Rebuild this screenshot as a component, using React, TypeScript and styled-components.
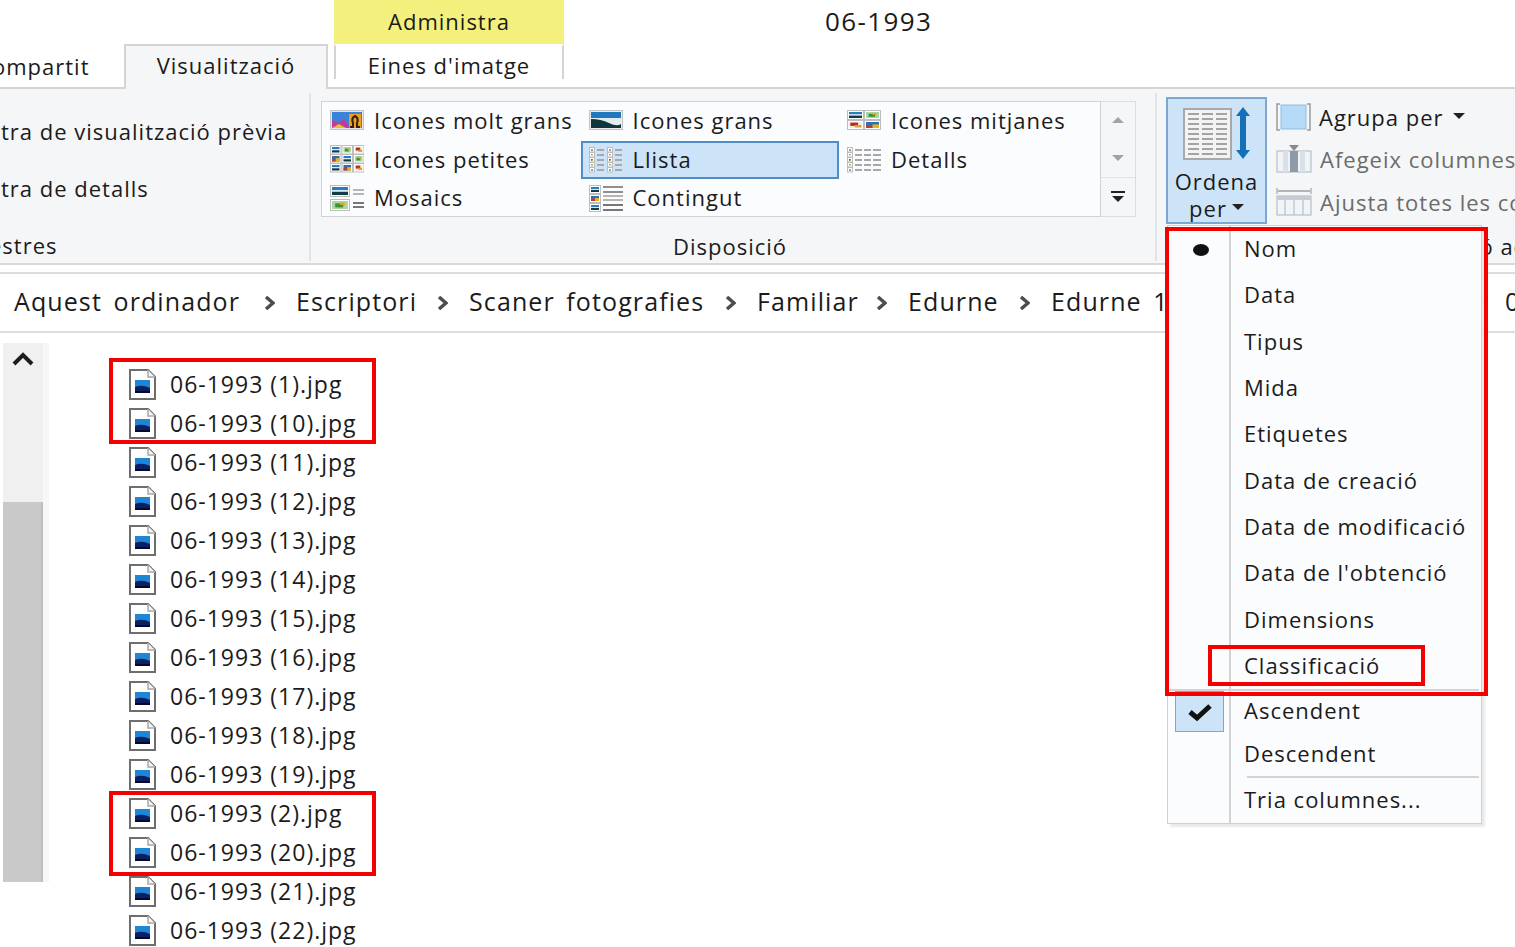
import React from 'react';
import styled, { createGlobalStyle } from 'styled-components';

const GlobalStyle = createGlobalStyle`
  html, body {
    margin: 0;
    padding: 0;
    background: #ffffff;
  }

  body {
    color: #1b1b1b;
    font-family: "Open Sans", "Noto Sans", sans-serif;
    letter-spacing: 1px;
  }
`;

const Page = styled.div`
  height: 947px;
  overflow: hidden;
  position: relative;
  width: 1515px;
`;

const TitleRow = styled.div`
  align-items: stretch;
  display: flex;
  height: 44px;
  padding-left: 334px;
`;

const ContextTab = styled.div`
  align-items: center;
  background: #f3f07e;
  display: flex;
  font-size: 22px;
  justify-content: center;
  padding-bottom: 2px;
  box-sizing: border-box;
  width: 230px;
`;

const WindowTitle = styled.div`
  align-items: center;
  display: flex;
  font-size: 26px;
  letter-spacing: 1.4px;
  margin-left: 261px;
  padding-bottom: 2px;
`;

const TabRow = styled.div`
  display: flex;
  height: 43px;
  position: relative;
`;

const Tab = styled.div<{ $active?: boolean; $width: number; $context?: boolean }>`
  align-items: center;
  background: ${(p) => (p.$active ? '#f5f6f7' : 'transparent')};
  border: 2px solid ${(p) => (p.$active ? '#d4d4d4' : 'transparent')};
  border-bottom: 0;
  border-left-color: ${(p) => (p.$context ? '#d4d4d4' : undefined)};
  border-right-color: ${(p) => (p.$context ? '#d4d4d4' : undefined)};
  box-sizing: border-box;
  display: flex;
  font-size: 22px;
  height: ${(p) => (p.$active ? '45px' : '35px')};
  justify-content: center;
  margin-right: ${(p) => (p.$active ? '6px' : '0')};
  padding: ${(p) => (p.$active ? '0 0 5px' : '5px 0 0')};
  position: relative;
  width: ${(p) => p.$width}px;
  z-index: 1;
`;

const ClippedTab = styled.div`
  align-items: center;
  display: flex;
  font-size: 22px;
  height: 43px;
  margin-left: -8px;
  width: 132px;
`;

const Ribbon = styled.div`
  background: #f5f6f7;
  border-bottom: 2px solid #d9d9d9;
  border-top: 2px solid #d4d4d4;
  box-sizing: border-box;
  display: flex;
  height: 178px;
  padding: 4px 0 2px;
`;

const LeftGroup = styled.div`
  border-right: 2px solid #e2e3e4;
  display: flex;
  flex-direction: column;
  flex-shrink: 0;
  font-size: 22px;
  gap: 29px;
  line-height: 28px;
  padding-top: 24px;
  width: 309px;
  white-space: nowrap;
`;

const LeftLine = styled.div<{ $shift: number }>`
  margin-left: ${(p) => p.$shift}px;
`;

const LayoutGroup = styled.div`
  border-right: 2px solid #e2e3e4;
  box-sizing: border-box;
  display: flex;
  flex-direction: column;
  flex-shrink: 0;
  padding: 8px 0 0 10px;
  width: 846px;
`;

const GalleryWrap = styled.div`
  display: flex;
`;

const Gallery = styled.div`
  background: #fbfcfe;
  border: 1px solid #d2d3d4;
  box-sizing: border-box;
  display: grid;
  grid-auto-rows: 38.5px;
  grid-template-columns: 258.5px 258.5px 258.5px;
  height: 116px;
  width: 780px;
`;

const GalleryItem = styled.div<{ $selected?: boolean }>`
  align-items: center;
  background: ${(p) => (p.$selected ? '#cde4f8' : 'transparent')};
  border: 2px solid ${(p) => (p.$selected ? '#4f8ec9' : 'transparent')};
  box-sizing: border-box;
  display: flex;
  font-size: 22px;
  gap: 10px;
  padding: 0 0 2px 6px;
  white-space: nowrap;
`;

const GalleryScroll = styled.div`
  border: 1px solid #dcddde;
  border-left: 0;
  box-sizing: border-box;
  display: flex;
  flex-direction: column;
  height: 116px;
  width: 35px;
`;

const ScrollCell = styled.div<{ $more?: boolean }>`
  align-items: center;
  border-top: ${(p) => (p.$more ? '1px solid #e2e3e4' : '0')};
  display: flex;
  flex: 1;
  flex-direction: column;
  gap: 3px;
  justify-content: center;
  padding-bottom: 1px;
`;

const MoreBar = styled.span`
  background: #222222;
  height: 2px;
  width: 14px;
`;

const Triangle = styled.span<{ $up?: boolean; $color?: string; $size?: number }>`
  border-bottom: ${(p) => (p.$up ? `${p.$size ?? 6}px solid ${p.$color ?? '#222222'}` : '0')};
  border-left: ${(p) => p.$size ?? 6}px solid transparent;
  border-right: ${(p) => p.$size ?? 6}px solid transparent;
  border-top: ${(p) => (p.$up ? '0' : `${p.$size ?? 6}px solid ${p.$color ?? '#222222'}`)};
  display: inline-block;
  height: 0;
  width: 0;
`;

const GroupLabel = styled.div`
  font-size: 22px;
  line-height: 28px;
  margin-top: auto;
  padding: 0 16px 1px 0;
  text-align: center;
  white-space: nowrap;
`;

const ViewGroup = styled.div`
  display: flex;
  flex-direction: column;
  flex-shrink: 0;
  padding: 4px 0 0 9px;
  width: 500px;
`;

const ViewLabel = styled(GroupLabel)`
  padding: 0 0 1px 189px;
  text-align: left;
`;

const ViewRow = styled.div`
  display: flex;
  gap: 9px;
`;

const SortButton = styled.div`
  align-items: center;
  background: #cde4f8;
  border: 2px solid #7ba8d2;
  box-sizing: border-box;
  display: flex;
  flex-direction: column;
  font-size: 22px;
  height: 127px;
  line-height: 27px;
  padding-top: 6px;
  width: 101px;

  svg {
    flex-shrink: 0;
  }
`;

const SortCaption = styled.div`
  margin-top: 7px;
  text-align: center;
`;

const ViewActions = styled.div`
  display: flex;
  flex-direction: column;
  gap: 13.5px;
  padding-top: 5px;
`;

const ViewAction = styled.div<{ $disabled?: boolean }>`
  align-items: center;
  color: ${(p) => (p.$disabled ? '#6c6c6c' : '#1b1b1b')};
  display: flex;
  font-size: 22px;
  gap: 8px;
  height: 29px;
  white-space: nowrap;
`;

const Caret = styled.span<{ $gap: number }>`
  display: inline-block;
  margin-left: ${(p) => p.$gap}px;
  transform: translateY(-7px);
`;

const AddressBar = styled.div`
  align-items: center;
  border-bottom: 2px solid #dcdcdc;
  border-top: 2px solid #dcdcdc;
  box-sizing: border-box;
  display: flex;
  font-size: 25px;
  height: 61px;
  letter-spacing: 1.1px;
  margin-top: 7px;
  padding: 0 0 3px 14px;
  white-space: nowrap;
  word-spacing: 4px;
`;

const Crumb = styled.span<{ $width: number }>`
  flex-shrink: 0;
  width: ${(p) => p.$width}px;
`;

const CrumbArrow = styled.svg`
  flex-shrink: 0;
  height: 14px;
  margin: 3px 21px 0 22px;
  width: 11px;
`;

const Content = styled.div`
  display: flex;
`;

const ScrollTrack = styled.div`
  background: #f0f0f0;
  display: flex;
  flex-direction: column;
  flex-shrink: 0;
  height: 539px;
  margin: 10px 0 0 3px;
  width: 40px;
`;

const ScrollArrow = styled.div`
  display: flex;
  height: 159px;
  justify-content: center;
  padding-top: 9px;
  box-sizing: border-box;
`;

const ScrollThumb = styled.div`
  background: #c9c9c9;
  border-right: 2px solid #bdbdbd;
  flex: 1;
`;

const ScrollEdge = styled.div`
  background: #f7f7f7;
  flex-shrink: 0;
  height: 539px;
  margin: 10px 0 0 0;
  width: 6px;
`;

const FileList = styled.div`
  display: flex;
  flex-direction: column;
  margin-left: 80px;
  padding-top: 31.5px;
`;

const Marked = styled.div<{ $top: number; $bottom: number }>`
  position: relative;

  &::after {
    border: 4px solid #f50000;
    bottom: ${(p) => -p.$bottom}px;
    content: '';
    left: -20px;
    position: absolute;
    top: ${(p) => -p.$top}px;
    width: 259px;
  }
`;

const FileRow = styled.div`
  align-items: center;
  display: flex;
  font-size: 23px;
  gap: 14px;
  height: 39px;
  white-space: nowrap;
`;

const Menu = styled.div`
  background: #fbfcfe;
  border: 1px solid #d0d0d0;
  box-shadow: 3px 3px 2px #e9e9e9;
  box-sizing: border-box;
  font-size: 22px;
  left: 1167px;
  padding-bottom: 1px;
  position: absolute;
  top: 225px;
  width: 315px;

  &::before {
    background: #d4d4d4;
    bottom: 0;
    content: '';
    left: 61px;
    position: absolute;
    top: 0;
    width: 2px;
  }
`;

const MenuSection = styled.div`
  position: relative;

  &::after {
    border: 4px solid #f50000;
    bottom: -7px;
    content: '';
    left: -3px;
    pointer-events: none;
    position: absolute;
    right: -7px;
    top: 1px;
    z-index: 2;
  }
`;

const MenuItem = styled.div<{ $height: number }>`
  align-items: center;
  box-sizing: border-box;
  display: flex;
  height: ${(p) => p.$height}px;
  padding: 0 0 2px 76px;
  position: relative;
  white-space: nowrap;
`;

const MarkedItem = styled.div`
  border: 4px solid #f50000;
  inset: 2px 56px 3px 40px;
  position: absolute;
`;

const Bullet = styled.span`
  background: #111111;
  border-radius: 50%;
  height: 12px;
  left: 25px;
  position: absolute;
  top: 18px;
  width: 16px;
`;

const MenuRule = styled.div<{ $inset: number }>`
  background: #d4d4d4;
  height: 2px;
  margin: 0 2px 0 ${(p) => p.$inset}px;
  position: relative;
`;

const CheckBox = styled.div`
  align-items: center;
  background: #cde4f8;
  border: 1px solid #7ba8d2;
  box-sizing: border-box;
  display: flex;
  height: 41px;
  justify-content: center;
  left: 7px;
  padding-top: 2px;
  position: absolute;
  top: 0;
  width: 49px;
`;

type PicKind = 'land' | 'flower' | 'warm' | 'city';

// little picture thumbnail used by the layout gallery icons
const Pic: React.FC<{ x: number; y: number; w: number; h: number; kind?: PicKind }> = ({
  x,
  y,
  w,
  h,
  kind = 'land',
}) => {
  const ix = x + 1.5;
  const iy = y + 1.5;
  const iw = w - 3;
  const ih = h - 3;
  return (
    <g>
      <rect x={x} y={y} width={w} height={h} fill="#ffffff" stroke="#bdbdbd" strokeWidth="1" />
      {kind === 'land' && (
        <>
          <rect x={ix} y={iy} width={iw} height={ih * 0.4} fill="#2b7cc2" />
          <rect x={ix} y={iy + ih * 0.4} width={iw} height={ih * 0.2} fill="#d9e8e8" />
          <rect x={ix} y={iy + ih * 0.6} width={iw} height={ih * 0.4} fill="#123c44" />
        </>
      )}
      {kind === 'flower' && (
        <>
          <rect x={ix} y={iy} width={iw} height={ih} fill="#a9d7a0" />
          <rect x={ix + iw * 0.2} y={iy + ih * 0.3} width={iw * 0.5} height={ih * 0.5} fill="#3f8f3a" />
          <rect x={ix + iw * 0.5} y={iy + ih * 0.2} width={iw * 0.3} height={ih * 0.3} fill="#d9a520" />
        </>
      )}
      {kind === 'warm' && (
        <>
          <rect x={ix} y={iy} width={iw} height={ih} fill="#f1ece4" />
          <rect x={ix + iw * 0.1} y={iy + ih * 0.1} width={iw * 0.6} height={ih * 0.55} fill="#c02a1c" />
          <rect x={ix + iw * 0.45} y={iy + ih * 0.5} width={iw * 0.5} height={ih * 0.4} fill="#e0a030" />
        </>
      )}
      {kind === 'city' && (
        <>
          <rect x={ix} y={iy} width={iw} height={ih} fill="#2f6db5" />
          <rect x={ix} y={iy + ih * 0.5} width={iw * 0.5} height={ih * 0.5} fill="#c13c2c" />
          <rect x={ix + iw * 0.5} y={iy + ih * 0.4} width={iw * 0.5} height={ih * 0.6} fill="#e4b520" />
        </>
      )}
    </g>
  );
};

const Lines: React.FC<{ x: number; y: number; w: number; n: number; step: number; color?: string }> = ({
  x,
  y,
  w,
  n,
  step,
  color = '#a8a8a8',
}) => (
  <>
    {Array.from({ length: n }).map((_, i) => (
      <rect key={i} x={x} y={y + i * step} width={w} height="2" fill={color} />
    ))}
  </>
);

const IconSvg = styled.svg`
  flex-shrink: 0;
  height: 34px;
  width: 34px;
`;

const ExtraLargeIcon = () => (
  <IconSvg viewBox="0 0 34 34">
    <rect x="0.5" y="7.5" width="33" height="19" fill="#e6e6e6" stroke="#c4c4c4" />
    <rect x="2" y="9" width="30" height="16" fill="#3b83d8" />
    <path d="M2 25 L2 17 L8 20 L14 16 L20 25 Z" fill="#c23aa0" />
    <path d="M2 25 L9 21 L16 25 Z" fill="#e8c020" />
    <rect x="19" y="11" width="12" height="14" fill="#e8a020" />
    <path d="M20 24 H23 V20 Q21 15 25 13 Q29 15 27 20 V24 H30" fill="none" stroke="#3a1c10" strokeWidth="2" />
  </IconSvg>
);

const LargeIcon = () => (
  <IconSvg viewBox="0 0 34 34">
    <rect x="0.5" y="7.5" width="33" height="19" fill="#ebebeb" stroke="#c4c4c4" />
    <rect x="2" y="9" width="30" height="6" fill="#2178bd" />
    <rect x="2" y="15" width="30" height="3" fill="#dfeced" />
    <path d="M2 16 Q12 16 20 20 T32 21 V25 H2 Z" fill="#10363d" />
  </IconSvg>
);

const MediumIcon = () => (
  <IconSvg viewBox="0 0 34 34">
    <Pic x={0.5} y={7.5} w={16} h={9} />
    <Pic x={17.5} y={7.5} w={16} h={9} kind="flower" />
    <Pic x={0.5} y={17.5} w={16} h={9} kind="warm" />
    <Pic x={17.5} y={17.5} w={16} h={9} kind="city" />
  </IconSvg>
);

const SmallIcon = () => {
  const kinds: PicKind[] = ['land', 'flower', 'warm', 'city', 'land', 'flower', 'land', 'city', 'warm'];
  return (
    <IconSvg viewBox="0 0 34 34">
      {kinds.map((kind, i) => (
        <Pic key={i} x={0.5 + (i % 3) * 11.5} y={3.5 + Math.floor(i / 3) * 9} w={10.5} h={8.5} kind={kind} />
      ))}
    </IconSvg>
  );
};

const ListIcon = () => {
  const kinds: PicKind[] = ['land', 'warm', 'city', 'flower', 'land'];
  return (
    <IconSvg viewBox="0 0 34 34">
      {[0, 18].map((col) => (
        <g key={col}>
          {kinds.map((kind, i) => (
            <Pic key={i} x={0.5 + col} y={5.5 + i * 5} w={5} h={4.5} kind={kind} />
          ))}
          <Lines x={8 + col} y={7} w={7} n={5} step={5} />
        </g>
      ))}
    </IconSvg>
  );
};

const DetailsIcon = () => {
  const kinds: PicKind[] = ['land', 'warm', 'city', 'flower', 'land'];
  return (
    <IconSvg viewBox="0 0 34 34">
      {kinds.map((kind, i) => (
        <Pic key={i} x={0.5} y={5.5 + i * 5} w={5} h={4.5} kind={kind} />
      ))}
      <Lines x={8} y={7} w={7} n={5} step={5} />
      <Lines x={17} y={7} w={7} n={5} step={5} />
      <Lines x={26} y={7} w={8} n={5} step={5} />
    </IconSvg>
  );
};

const TilesIcon = () => (
  <IconSvg viewBox="0 0 34 34">
    <Pic x={0.5} y={5.5} w={19} h={11} />
    <Pic x={0.5} y={19.5} w={19} h={11} kind="flower" />
    <Lines x={23} y={9} w={11} n={2} step={4} color="#b5b5b5" />
    <Lines x={23} y={22} w={11} n={2} step={4} color="#777777" />
  </IconSvg>
);

const ContentIcon = () => (
  <IconSvg viewBox="0 0 34 34">
    <Pic x={0.5} y={5.5} w={11} h={8} />
    <Pic x={0.5} y={14.5} w={11} h={8} kind="city" />
    <Pic x={0.5} y={23.5} w={11} h={8} />
    <Lines x={14} y={6} w={20} n={2} step={5} color="#8f8f8f" />
    <Lines x={14} y={15} w={20} n={2} step={4} color="#b5b5b5" />
    <Lines x={14} y={24} w={20} n={2} step={5} color="#777777" />
  </IconSvg>
);

const SortIcon = () => (
  <svg width="68" height="56" viewBox="0 0 68 56">
    <rect x="1" y="4" width="47" height="50" fill="#f3f3f3" stroke="#a9a9a9" strokeWidth="2" />
    {[0, 1, 2].map((c) => (
      <Lines key={c} x={5 + c * 14} y={8} w={11} n={9} step={5} color="#a4a4a4" />
    ))}
    <path d="M60 2 L67 11 H63 V45 H67 L60 54 L53 45 H57 V11 H53 Z" fill="#1570b8" />
  </svg>
);

const GroupIcon = () => (
  <svg width="35" height="30" viewBox="0 0 35 30">
    <path d="M4 2 H1 V28 H4 M31 2 H34 V28 H31" fill="none" stroke="#9a9a9a" strokeWidth="1.5" />
    <rect x="5" y="3" width="25" height="24" fill="#b6dbf8" stroke="#90bde0" />
  </svg>
);

const AddColumnsIcon = () => (
  <svg width="36" height="28" viewBox="0 0 36 28">
    <rect x="1" y="6" width="34" height="21" fill="#f1f4f7" stroke="#a9b4c0" />
    <rect x="7" y="6" width="5" height="21" fill="#d8e0e8" />
    <rect x="24" y="6" width="5" height="21" fill="#d8e0e8" />
    <rect x="14" y="6" width="8" height="21" fill="#8e9aa8" />
    <path d="M13 0 H23 L18 6 Z" fill="#8a8a8a" />
  </svg>
);

const FitColumnsIcon = () => (
  <svg width="36" height="28" viewBox="0 0 36 28">
    <path d="M1 0 V6 M35 0 V6" stroke="#8a94a0" />
    <path d="M2 3 H34" stroke="#6a7480" />
    <rect x="1" y="8" width="34" height="19" fill="#f1f4f7" stroke="#a9b4c0" />
    <rect x="1" y="8" width="34" height="4" fill="#c5ccd4" />
    <path d="M9 12 V27 M18 12 V27 M27 12 V27" stroke="#a9b4c0" />
  </svg>
);

const CheckIcon = () => (
  <svg width="26" height="20" viewBox="0 0 26 20">
    <path d="M3 10 L10 16 L23 4" fill="none" stroke="#111111" strokeWidth="5" />
  </svg>
);

const UpChevron = () => (
  <svg width="22" height="14" viewBox="0 0 22 14">
    <path d="M2 12 L11 3 L20 12" fill="none" stroke="#1c1c1c" strokeWidth="4" />
  </svg>
);

const FileIcon = () => (
  <svg width="27" height="31" viewBox="0 0 27 31" style={{ flexShrink: 0 }}>
    <path d="M1 1 H19 L26 8 V30 H1 Z" fill="#ffffff" stroke="#6e6e6e" strokeWidth="2" />
    <path d="M19 1 V8 H26" fill="#f4f4f4" stroke="#a8a8a8" strokeWidth="1.5" />
    <rect x="6" y="11" width="15" height="13" fill="#1f86d6" />
    <path d="M6 18 Q13 15 21 19 V24 H6 Z" fill="#0b1f63" />
    <rect x="6" y="22" width="15" height="2" fill="#05092e" />
  </svg>
);

const Arrow = () => (
  <CrumbArrow viewBox="0 0 11 14">
    <path d="M2 1 L9 7 L2 13" fill="none" stroke="#4d4d4d" strokeWidth="3.5" />
  </CrumbArrow>
);

const galleryItems: { label: string; icon: React.ReactNode; selected?: boolean }[] = [
  { label: 'Icones molt grans', icon: <ExtraLargeIcon /> },
  { label: 'Icones grans', icon: <LargeIcon /> },
  { label: 'Icones mitjanes', icon: <MediumIcon /> },
  { label: 'Icones petites', icon: <SmallIcon /> },
  { label: 'Llista', icon: <ListIcon />, selected: true },
  { label: 'Detalls', icon: <DetailsIcon /> },
  { label: 'Mosaics', icon: <TilesIcon /> },
  { label: 'Contingut', icon: <ContentIcon /> },
];

const crumbs = [
  { label: 'Aquest ordinador', width: 228 },
  { label: 'Escriptori', width: 119 },
  { label: 'Scaner fotografies', width: 234 },
  { label: 'Familiar', width: 97 },
  { label: 'Edurne', width: 89 },
];

const sortFields = [
  'Data',
  'Tipus',
  'Mida',
  'Etiquetes',
  'Data de creació',
  'Data de modificació',
  "Data de l'obtenció",
  'Dimensions',
];

const File: React.FC<{ n: number }> = ({ n }) => (
  <FileRow>
    <FileIcon />
    <span>06-1993 ({n}).jpg</span>
  </FileRow>
);

const App: React.FC = () => {
  return (
    <Page>
      <GlobalStyle />
      <TitleRow>
        <ContextTab>Administra</ContextTab>
        <WindowTitle>06-1993</WindowTitle>
      </TitleRow>
      <TabRow>
        <ClippedTab>ompartit</ClippedTab>
        <Tab $active $width={204}>
          Visualització
        </Tab>
        <Tab $context $width={230}>
          Eines d'imatge
        </Tab>
      </TabRow>
      <Ribbon>
        <LeftGroup>
          <LeftLine $shift={1}>tra de visualització prèvia</LeftLine>
          <LeftLine $shift={1}>tra de detalls</LeftLine>
          <LeftLine $shift={-11}>estres</LeftLine>
        </LeftGroup>
        <LayoutGroup>
          <GalleryWrap>
            <Gallery>
              {galleryItems.map((item) => (
                <GalleryItem key={item.label} $selected={item.selected}>
                  {item.icon}
                  {item.label}
                </GalleryItem>
              ))}
            </Gallery>
            <GalleryScroll>
              <ScrollCell>
                <Triangle $up $color="#a3a3a3" />
              </ScrollCell>
              <ScrollCell>
                <Triangle $color="#a3a3a3" />
              </ScrollCell>
              <ScrollCell $more>
                <MoreBar />
                <Triangle />
              </ScrollCell>
            </GalleryScroll>
          </GalleryWrap>
          <GroupLabel>Disposició</GroupLabel>
        </LayoutGroup>
        <ViewGroup>
          <ViewRow>
            <SortButton>
              <SortIcon />
              <SortCaption>
                Ordena
                <br />
                per
                <Caret $gap={5}>
                  <Triangle />
                </Caret>
              </SortCaption>
            </SortButton>
            <ViewActions>
              <ViewAction>
                <GroupIcon />
                <span>
                  Agrupa per
                  <Caret $gap={9}>
                    <Triangle />
                  </Caret>
                </span>
              </ViewAction>
              <ViewAction $disabled>
                <AddColumnsIcon />
                Afegeix columnes
              </ViewAction>
              <ViewAction $disabled>
                <FitColumnsIcon />
                Ajusta totes les columnes
              </ViewAction>
            </ViewActions>
          </ViewRow>
          <ViewLabel>Visualització actual</ViewLabel>
        </ViewGroup>
      </Ribbon>
      <AddressBar>
        {crumbs.map((crumb) => (
          <React.Fragment key={crumb.label}>
            <Crumb $width={crumb.width}>{crumb.label}</Crumb>
            <Arrow />
          </React.Fragment>
        ))}
        <Crumb $width={400}>Edurne 1</Crumb>
        <Arrow />
        <Crumb $width={90}>06-1993</Crumb>
      </AddressBar>
      <Content>
        <ScrollTrack>
          <ScrollArrow>
            <UpChevron />
          </ScrollArrow>
          <ScrollThumb />
        </ScrollTrack>
        <ScrollEdge />
        <FileList>
          <Marked $top={6.5} $bottom={1.5}>
            <File n={1} />
            <File n={10} />
          </Marked>
          {[11, 12, 13, 14, 15, 16, 17, 18, 19].map((n) => (
            <File key={n} n={n} />
          ))}
          <Marked $top={2.5} $bottom={4.5}>
            <File n={2} />
            <File n={20} />
          </Marked>
          <File n={21} />
          <File n={22} />
        </FileList>
      </Content>
      <Menu>
        <MenuSection>
          <MenuItem $height={46.3}>
            <Bullet />
            Nom
          </MenuItem>
          {sortFields.map((field) => (
            <MenuItem key={field} $height={46.3}>
              {field}
            </MenuItem>
          ))}
          <MenuItem $height={46.3}>
            <MarkedItem />
            Classificació
          </MenuItem>
        </MenuSection>
        <MenuRule $inset={0} />
        <MenuItem $height={41}>
          <CheckBox>
            <CheckIcon />
          </CheckBox>
          Ascendent
        </MenuItem>
        <MenuItem $height={44}>Descendent</MenuItem>
        <MenuRule $inset={79} />
        <MenuItem $height={44}>Tria columnes...</MenuItem>
      </Menu>
    </Page>
  );
};

export default App;
